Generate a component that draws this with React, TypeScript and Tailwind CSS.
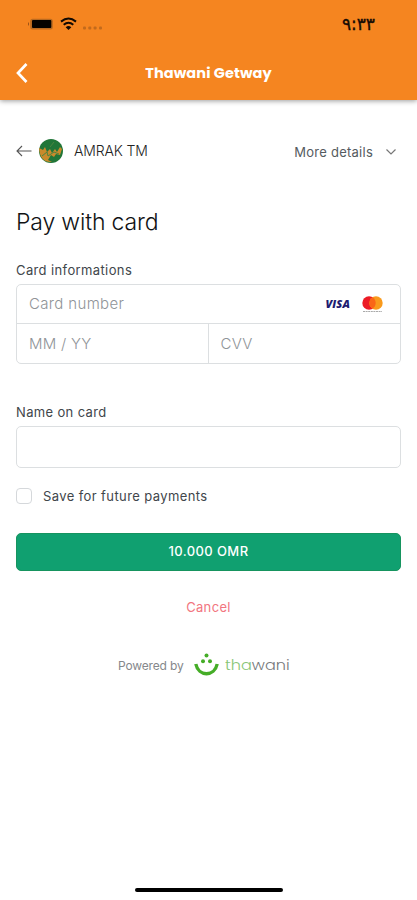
import React from "react";

function StatusBar() {
  return (
    <div className="flex h-[46px] items-start justify-between pl-[27px] pr-[42px] text-[#160c04]">
      <svg className="mt-[16px]" width="78" height="16" viewBox="0 0 78 16">
        <path d="M2 6 Q0 8 2 10Z" fill="#934f16" />
        <rect x="3.2" y="2.7" width="22.6" height="10.8" rx="2.5" fill="#b96a20" />
        <rect x="5" y="4" width="19.3" height="8" rx="1" fill="#050300" />
        <g fill="none" stroke="#120a03" strokeWidth="2">
          <path d="M34 5.6 Q41.5 -.5 49 5.6" />
          <path d="M36.7 8.7 Q41.5 4.8 46.3 8.7" />
        </g>
        <path d="M38.7 11.2 Q41.5 9 44.3 11.2 L41.5 14Z" fill="#120a03" />
        <g fill="#c26a1c">
          <rect x="56" y="10.5" width="3" height="3" rx="1" />
          <rect x="61.3" y="10.5" width="3" height="3" rx="1" />
          <rect x="66.6" y="10.5" width="3" height="3" rx="1" />
          <rect x="72" y="10.5" width="3" height="3" rx="1" />
        </g>
      </svg>
      <span dir="ltr" className="mt-[13px] font-['DejaVu_Sans',sans-serif] text-[17px] leading-[22px] tracking-[0.8px] [-webkit-text-stroke:0.35px_#160c04]">٩:٣٣</span>
    </div>
  );
}

function Header() {
  return (
    <header className="relative z-10 h-[100px] bg-[#f58520] shadow-[0_1px_5px_rgba(0,0,0,0.4)]">
      <StatusBar />
      <div className="grid h-[54px] grid-cols-[60px_1fr_60px] items-center">
        <svg className="ml-[15px]" width="14" height="22" viewBox="0 0 14 22" fill="none" stroke="white" strokeWidth="2.7">
          <path d="M11.5 2 L3 11 L11.5 20" />
        </svg>
        <h1 className="mt-[2px] whitespace-nowrap text-center font-['Poppins','Inter',sans-serif] text-[14.5px] font-bold tracking-[0.1px] text-white">Thawani Getway</h1>
      </div>
    </header>
  );
}

function Merchant() {
  return (
    <div className="flex h-[26px] items-center">
      <svg width="16" height="12" viewBox="0 0 16 12" fill="none" stroke="#555" strokeWidth="1.1">
        <path d="M15.5 6H1M6 1L1 6L6 11" />
      </svg>
      <svg className="ml-[7px]" width="24" height="24" viewBox="0 0 24 24">
        <circle cx="12" cy="12" r="12" fill="#217638" />
        <path d="M0 9 L4 11 L6 8 L8 13 L11 10 L13 14 L16 10 L18 13 L21 8 L23 10 L21 16 L17 15 L15 18 L12 16 L9 21 L13 23 Q1 24 0 9Z" fill="#c98a2b" />
        <path d="M3 17 L8 13 L9 17 L15 13 L20 15 M11 8 L15 3" fill="none" stroke="#4b8541" strokeWidth="1" />
      </svg>
      <span className="-mt-[2px] ml-[11px] text-[14px] font-light tracking-[-0.15px] text-[#222]">AMRAK TM</span>
      <span className="ml-auto mt-[3px] text-[13px] tracking-[0.25px] text-[#555b60]">More details</span>
      <svg className="ml-[13px] mr-[5px] mt-[2px]" width="10" height="6" viewBox="0 0 10 6" fill="none" stroke="#777" strokeWidth="1.2">
        <path d="M.5 .5L5 5L9.5 .5" />
      </svg>
    </div>
  );
}

function CardFields() {
  return (
    <div className="mt-[4px] h-[80px] rounded-[5px] border border-[#dcdfe1] text-[15px] font-light text-[#909498]">
      <div className="flex h-[39px] items-center border-b border-[#dcdfe1] px-[12px]">
        <span className="pt-px tracking-[0.35px]">Card number</span>
        <span className="ml-auto font-['Open_Sans',sans-serif] text-[11px] font-extrabold italic tracking-[0.1px] text-[#201b70]">VISA</span>
        <svg className="ml-[12px] mr-[5px]" width="21" height="17" viewBox="0 0 21 17">
          <circle cx="7" cy="7" r="6.7" fill="#ec1b25" />
          <circle cx="14" cy="7" r="6.7" fill="#f99a1c" />
          <path d="M10.5 1.3 A6.7 6.7 0 0 1 10.5 12.7 A6.7 6.7 0 0 1 10.5 1.3" fill="#fa6517" />
          <path d="M1 15.5H20" stroke="#aaa" strokeWidth="1" strokeDasharray="2 .6" />
        </svg>
      </div>
      <div className="grid h-[39px] grid-cols-2 items-stretch">
        <span className="flex items-center border-r border-[#dcdfe1] pl-[12px] pt-[2px] tracking-[0.25px]">MM / YY</span>
        <span className="flex items-center pl-[12px] pt-[2px] tracking-[0.25px]">CVV</span>
      </div>
    </div>
  );
}

function Powered() {
  return (
    <div className="mt-[35px] flex h-[26px] items-center pl-[102px]">
      <span className="w-[76px] whitespace-nowrap pt-[2px] text-[12px] tracking-[-0.15px] text-[#85888b]">Powered by</span>
      <svg width="25" height="24" viewBox="0 0 25 24" fill="#45ad27">
        <circle cx="12.5" cy="2.5" r="2" />
        <circle cx="9" cy="8.2" r="2" />
        <circle cx="16" cy="8.2" r="2" />
        <path d="M1.8 11 C4.5 24 20.5 24 23.2 11" fill="none" stroke="#45ad27" strokeWidth="3.4" />
      </svg>
      <span className="ml-[6px] origin-left scale-x-[1.11] font-['Poppins','Lato',sans-serif] text-[14.5px] font-light leading-5 text-[#77797b]"><span className="text-[#86c575]">tha</span>wani</span>
    </div>
  );
}

export default function App() {
  return (
    <div className="flex h-[900px] w-[417px] flex-col bg-white font-['Inter',sans-serif]">
      <Header />
      <main className="flex flex-col px-4 pt-[38px]">
        <Merchant />
        <h2 className="mt-[42px] text-[23px] font-light leading-[32px] tracking-[-0.15px] text-[#101214]">Pay with card</h2>
        <div className="mt-[22px] text-[13px] leading-[20px] tracking-[0.38px] text-[#41464b]">Card informations</div>
        <CardFields />
        <div className="mt-[38px] text-[13px] leading-[20px] tracking-[0.35px] text-[#41464b]">Name on card</div>
        <div className="mt-[4px] h-[42px] rounded-[5px] border border-[#dcdfe1]" />
        <div className="mt-[18px] flex h-[20px] items-center">
          <span className="h-4 w-4 rounded-[4px] border border-[#d5d8db]" />
          <span className="ml-[11px] pt-px text-[13px] tracking-[0.4px] text-[#41464b]">Save for future payments</span>
        </div>
        <button className="mt-[27px] h-[38px] rounded-[5px] border border-[#16945f] bg-[#10a070] text-[13px] font-medium tracking-[0.4px] text-white">10.000 OMR</button>
        <div className="mt-[26px] text-center text-[13px] leading-[20px] tracking-[0.35px] text-[#f27580]">Cancel</div>
        <Powered />
      </main>
      <div className="mb-[8px] ml-[135px] mt-auto h-[4px] w-[148px] rounded-full bg-black" />
    </div>
  );
}
